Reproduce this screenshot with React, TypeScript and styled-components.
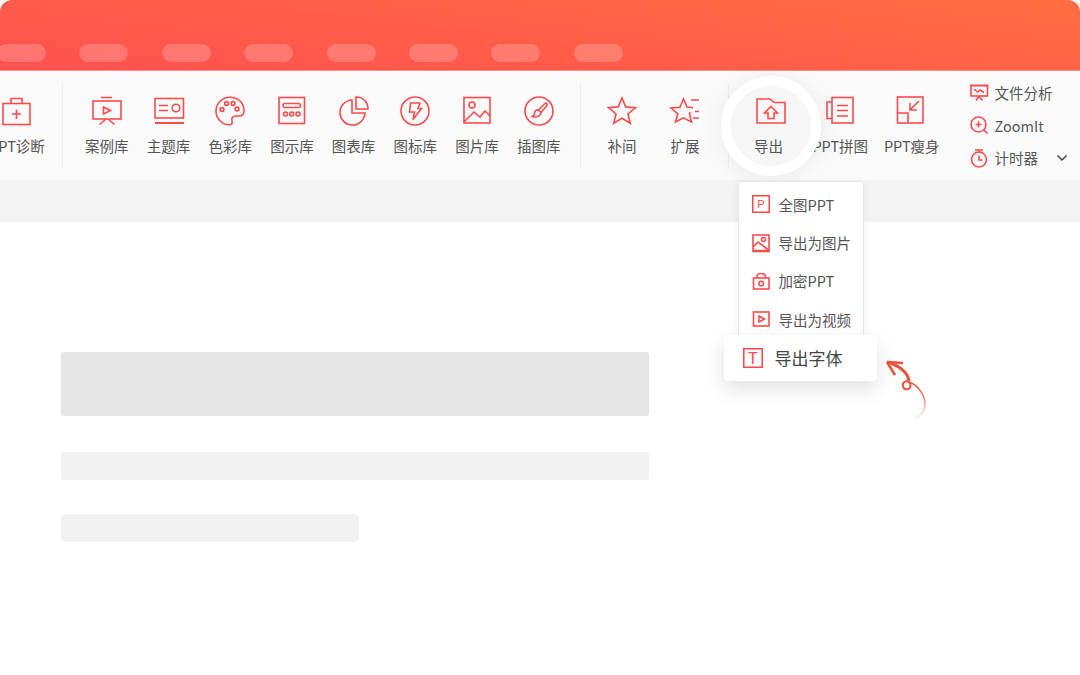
import React from 'react';
import styled, { createGlobalStyle } from 'styled-components';

const RED = '#f94b4b';

const GlobalStyle = createGlobalStyle`
  html, body {
    margin: 0;
    padding: 0;
    height: 100%;
    overflow: hidden;
    background: #fff;
    font-family: "Noto Sans CJK SC", "Noto Sans", sans-serif;
  }
`;

const Glyph = styled.svg<{ $size: number }>`
  display: block;
  flex: none;
  overflow: visible;
  width: ${({ $size }) => $size}px;
  height: ${({ $size }) => $size}px;
  fill: none;
  stroke: ${RED};
  stroke-width: 1.6;
`;

const icons: Record<string, React.ReactNode> = {
  diagnose: (
    <>
      <rect x="1" y="7.5" width="27" height="21" />
      <path d="M9 7.5V2.5H20V7.5M14.5 13.5V23M10 18H19" />
    </>
  ),
  cases: (
    <>
      <rect x="1" y="5" width="28" height="18" />
      <path d="M9 1.5H20M11.5 11L18.5 14.5L11.5 18ZM14 23L7.5 28.5M16 23L22.5 28.5" />
    </>
  ),
  theme: (
    <>
      <rect x="1" y="2.5" width="28.5" height="19.5" />
      <path d="M5 9.5H14M5 14.5H14" />
      <circle cx="22" cy="12" r="3.8" />
      <path d="M1 27H30" strokeWidth="2" />
    </>
  ),
  palette: (
    <>
      <path d="M15 1.2C7 1.2 1 7.5 1 15C1 22.5 7 28.8 14.5 28.8C17 28.8 17.8 27 17 25C16 22 18 20 21 20H24C27 20 29 18 29 14.5C29 7 23 1.2 15 1.2Z" />
      <circle cx="7" cy="13.5" r="1.9" />
      <circle cx="11.5" cy="7.5" r="1.9" />
      <circle cx="18" cy="7.5" r="1.9" />
      <circle cx="22" cy="13" r="1.9" />
    </>
  ),
  diagram: (
    <>
      <rect x="2" y="1.5" width="25.5" height="26" />
      <rect x="6" y="7.5" width="17.5" height="4" rx="2" />
      <circle cx="8.5" cy="18" r="2" />
      <circle cx="14.7" cy="18" r="2" />
      <circle cx="21" cy="18" r="2" />
    </>
  ),
  chart: (
    <>
      <path d="M13 4A12.5 12.5 0 1 0 26 17H13Z" />
      <path d="M17 1C24 1 29 6 29 13H17Z" />
    </>
  ),
  bolt: (
    <>
      <circle cx="15" cy="15" r="14" />
      <path d="M10.5 7H20L18 12.5H21.5L13 23.5L14.5 16H9.5Z" />
    </>
  ),
  picture: (
    <>
      <rect x="2" y="1.5" width="26" height="25.5" />
      <circle cx="10" cy="9" r="3" />
      <path d="M2 26L12 16L18 21L23 15L28 20" />
    </>
  ),
  brush: (
    <>
      <circle cx="15" cy="15" r="14" />
      <path d="M14.5 14L21 7.5C22 6.5 24 8 23 9.5L17 16.5M14.5 14C12 13.5 10.5 15 10.5 17.5C10.5 19 9.5 20 8.5 20.5C11 21.5 16.5 21 17 16.5Z" />
    </>
  ),
  star: <path d="M15 2L18.7 10.9L28.5 11.7L21 18L23.3 27.3L15 22.3L6.7 27.3L9 18L1.5 11.7L11.3 10.9Z" />,
  starList: (
    <>
      <path d="M20 16L19.5 17.8L21.5 26L13.5 21.8L5.5 26L7.8 17.8L1 12L10 11.2L13.5 3L17 11L23 11.7" />
      <path d="M21 4H29M25 15.5H29M23 22H29" />
    </>
  ),
  folderUp: (
    <>
      <path d="M3 3H16L20 6.5H31V27H3Z" />
      <path d="M17 10.5L23.5 17H20V22.5H14V17H10.5Z" />
    </>
  ),
  book: (
    <>
      <rect x="7" y="1.5" width="21" height="25.5" />
      <path d="M7 6H2V22.5H7M12 9.5H23M12 14.5H23M12 20H23" />
    </>
  ),
  slim: (
    <>
      <rect x="0.5" y="1" width="25.5" height="26" />
      <path d="M0.5 17H11V27M22 5L13 14M13 7V14H20" />
    </>
  ),
  board: (
    <>
      <rect x="1" y="1.5" width="16.5" height="10.5" />
      <path d="M4 5L7.5 8L10 6L14 8.5M0 1.5H18.5M6 16.5L9 12.5L12.5 16.5" />
    </>
  ),
  zoom: (
    <>
      <circle cx="8.5" cy="8.5" r="7.5" />
      <path d="M14 14L17.5 17.5M8.5 5.5V11.5M5.5 8.5H11.5" />
    </>
  ),
  timer: (
    <>
      <circle cx="9" cy="10.5" r="7.5" />
      <path d="M5 1H13M9 1V3M9 6.5V11H12.5" />
    </>
  ),
  picSmall: (
    <>
      <rect x="1" y="1" width="16" height="16.5" />
      <circle cx="11.5" cy="5.5" r="2" />
      <path d="M1 13L6 8L16.5 16M1 16.5H17" />
    </>
  ),
  lock: (
    <>
      <rect x="1.5" y="6" width="15.5" height="11" />
      <path d="M5 6V4.5C5 0.5 13.5 0.5 13.5 4.5V6" />
      <circle cx="9.2" cy="11.5" r="2.3" />
    </>
  ),
  video: (
    <>
      <rect x="1.5" y="2" width="15.5" height="14" />
      <path d="M7 6L12.5 9L7 12Z" />
    </>
  ),
};

const Icon = ({ name, size = 30 }: { name: string; size?: number }) => (
  <Glyph $size={size} viewBox={`0 0 ${size} ${size}`}>
    {icons[name]}
  </Glyph>
);

const LetterIcon = ({ letter, size, scale }: { letter: string; size: number; scale: number }) => (
  <Glyph $size={size} viewBox={`0 0 ${size} ${size}`}>
    <rect x="0.75" y="0.75" width={size - 1.5} height={size - 1.5} />
    <LetterMark x={size / 2} y={size / 2 + size * scale * 0.36} $size={size * scale}>
      {letter}
    </LetterMark>
  </Glyph>
);

const libraryTools = [
  { icon: 'cases', label: '案例库' },
  { icon: 'theme', label: '主题库' },
  { icon: 'palette', label: '色彩库' },
  { icon: 'diagram', label: '图示库' },
  { icon: 'chart', label: '图表库' },
  { icon: 'bolt', label: '图标库' },
  { icon: 'picture', label: '图片库' },
  { icon: 'brush', label: '插图库' },
];

const sideTools = [
  { icon: 'board', label: '文件分析' },
  { icon: 'zoom', label: 'ZoomIt' },
  { icon: 'timer', label: '计时器' },
];

const App: React.FC = () => {
  return (
    <Page>
      <GlobalStyle />
      <TitleBar>
        {Array.from({ length: 8 }, (_, i) => (
          <Tab key={i} />
        ))}
      </TitleBar>

      <Toolbar>
        <ToolItem $width={62}>
          <Icon name="diagnose" />
          <ToolLabel>PPT诊断</ToolLabel>
        </ToolItem>
        <Divider $before={14} $after={13} />
        {libraryTools.map((tool) => (
          <ToolItem $width={61.7} key={tool.label}>
            <Icon name={tool.icon} />
            <ToolLabel>{tool.label}</ToolLabel>
          </ToolItem>
        ))}
        <Divider $before={10.5} $after={9.5} />
        <ToolItem $width={63}>
          <Icon name="star" />
          <ToolLabel>补间</ToolLabel>
        </ToolItem>
        <ToolItem $width={63}>
          <Icon name="starList" />
          <ToolLabel>扩展</ToolLabel>
        </ToolItem>
        <Divider $before={11} $after={4} />
        <ExportItem $width={72}>
          <Spotlight />
          <Icon name="folderUp" />
          <ToolLabel>导出</ToolLabel>
          <Dropdown>
            <MenuRow>
              <LetterIcon letter="P" size={18} scale={0.62} />
              全图PPT
            </MenuRow>
            <MenuRow>
              <Icon name="picSmall" size={18} />
              导出为图片
            </MenuRow>
            <MenuRow>
              <Icon name="lock" size={18} />
              加密PPT
            </MenuRow>
            <MenuRow>
              <Icon name="video" size={18} />
              导出为视频
            </MenuRow>
            <FeaturedRow>
              <LetterIcon letter="T" size={20} scale={0.8} />
              导出字体
              <CurlyArrow viewBox="0 0 60 80">
                <defs>
                  <linearGradient id="arrowFade" gradientUnits="userSpaceOnUse" x1="0" y1="38" x2="0" y2="70">
                    <stop offset="0" stopColor="#e9553a" />
                    <stop offset="1" stopColor="#e9553a" stopOpacity="0" />
                  </linearGradient>
                </defs>
                <path d="M7 12L23 13M7 12L15 25" stroke="#e9553a" strokeWidth="2.6" />
                <path d="M7 12C18 15 28 22 29 31" stroke="#e9553a" strokeWidth="3" />
                <path d="M29 32C25 30 22 33 23 36.5C24 40.5 30 40 30.5 36C31 33 29 32 28 32" stroke="#e9553a" strokeWidth="2" />
                <path d="M28 32C36 33 45 44 45 54C45 63 38 69 28 70" stroke="url(#arrowFade)" strokeWidth="1.6" />
              </CurlyArrow>
            </FeaturedRow>
          </Dropdown>
        </ExportItem>
        <ToolItem $width={71.5}>
          <Icon name="book" />
          <ToolLabel>PPT拼图</ToolLabel>
        </ToolItem>
        <ToolItem $width={71.5}>
          <Icon name="slim" />
          <ToolLabel>PPT瘦身</ToolLabel>
        </ToolItem>
        <SideTools>
          {sideTools.map((tool) => (
            <SideRow key={tool.label}>
              <Icon name={tool.icon} size={19} />
              <ToolLabel>{tool.label}</ToolLabel>
            </SideRow>
          ))}
          <Chevron viewBox="0 0 12 8">
            <path d="M1.5 1.5L6 6L10.5 1.5" />
          </Chevron>
        </SideTools>
      </Toolbar>

      <SubBar />

      <Slide>
        <TitleBlock />
        <LineBlock $width={588} />
        <LineBlock $width={298} />
      </Slide>
    </Page>
  );
};

const Page = styled.div`
  width: 1080px;
  height: 675px;
  overflow: hidden;
  background: #fff;
`;

const TitleBar = styled.div`
  box-sizing: border-box;
  height: 71px;
  padding: 44px 0 0 0;
  display: flex;
  gap: 33.4px;
  border-radius: 12px 12px 0 0;
  border-bottom: 1px solid #ff8d86;
  background: linear-gradient(187deg, #ff6e41 0%, #ff5050 100%);
`;

const Tab = styled.div`
  flex: none;
  width: 49px;
  height: 18px;
  border-radius: 9px;
  background: rgba(255, 255, 255, 0.2);

  &:first-child {
    margin-left: -3px;
  }
`;

const Toolbar = styled.div`
  height: 109px;
  display: flex;
  align-items: stretch;
  margin-left: -14px;
  background: #fafafa;
  width: 1094px;
`;

const ToolItem = styled.div<{ $width: number }>`
  flex: none;
  width: ${({ $width }) => $width}px;
  box-sizing: border-box;
  padding-top: 25px;
  display: flex;
  flex-direction: column;
  align-items: center;
`;

const ExportItem = styled(ToolItem)`
  position: relative;
  z-index: 2;
`;

const ToolLabel = styled.span`
  margin-top: 9px;
  font-size: 14.5px;
  line-height: 22px;
  color: #555;
  white-space: nowrap;
`;

const Divider = styled.div<{ $before: number; $after: number }>`
  flex: none;
  align-self: center;
  width: 1px;
  height: 85px;
  margin: 0 ${({ $after }) => $after}px 0 ${({ $before }) => $before}px;
  background: #eeeeee;
`;

const Spotlight = styled.div`
  position: absolute;
  z-index: -1;
  left: 50%;
  top: 5px;
  width: 100px;
  height: 100px;
  margin-left: -48px;
  box-sizing: border-box;
  border: 10px solid #fff;
  border-radius: 50%;
  background: #f6f6f6;
  box-shadow: 0 2px 24px rgba(0, 0, 0, 0.07);
`;

const Dropdown = styled.div`
  position: absolute;
  top: 110px;
  left: 5px;
  width: 126px;
  height: 160px;
  box-sizing: border-box;
  padding-top: 3px;
  background: #fff;
  border: 1px solid #e6e8ef;
  border-radius: 4px;
  box-shadow: 0 2px 10px rgba(0, 0, 0, 0.06);
`;

const MenuRow = styled.div`
  height: 38.4px;
  display: flex;
  align-items: center;
  gap: 9px;
  padding-left: 13px;
  font-size: 14.5px;
  color: #555;
  white-space: nowrap;
`;

const FeaturedRow = styled.div`
  position: absolute;
  top: 153px;
  left: -15px;
  width: 153px;
  height: 46px;
  box-sizing: border-box;
  padding-left: 19px;
  display: flex;
  align-items: center;
  gap: 12px;
  font-size: 17px;
  line-height: 22px;
  color: #444;
  white-space: nowrap;
  background: #fff;
  border-radius: 4px;
  box-shadow: 0 8px 20px rgba(0, 0, 0, 0.12);
`;

const LetterMark = styled.text<{ $size: number }>`
  font-family: "Liberation Sans", sans-serif;
  font-size: ${({ $size }) => $size}px;
  text-anchor: middle;
  fill: ${RED};
  stroke: none;
`;

const CurlyArrow = styled.svg`
  position: absolute;
  left: 156px;
  top: 15px;
  width: 60px;
  height: 80px;
  fill: none;
`;

const SideTools = styled.div`
  position: relative;
  flex: none;
  margin-left: 22px;
  padding-top: 9px;
  display: flex;
  flex-direction: column;
  gap: 6.5px;
`;

const SideRow = styled.div`
  height: 26px;
  display: flex;
  align-items: center;
  gap: 6px;

  ${ToolLabel} {
    margin-top: 0;
  }
`;

const Chevron = styled.svg`
  position: absolute;
  left: 86px;
  top: 83px;
  width: 12px;
  height: 8px;
  fill: none;
  stroke: #444;
  stroke-width: 1.5;
`;

const SubBar = styled.div`
  height: 42px;
  background: #f3f3f3;
`;

const Slide = styled.div`
  padding: 130px 0 0 61px;
  display: flex;
  flex-direction: column;
  align-items: flex-start;
  gap: 34px;
`;

const TitleBlock = styled.div`
  width: 588px;
  height: 64px;
  margin-bottom: 2px;
  border-radius: 3px;
  background: #e5e5e5;
`;

const LineBlock = styled.div<{ $width: number }>`
  width: ${({ $width }) => $width}px;
  height: 28px;
  border-radius: 3px;
  background: #f2f2f2;
`;

export default App;
